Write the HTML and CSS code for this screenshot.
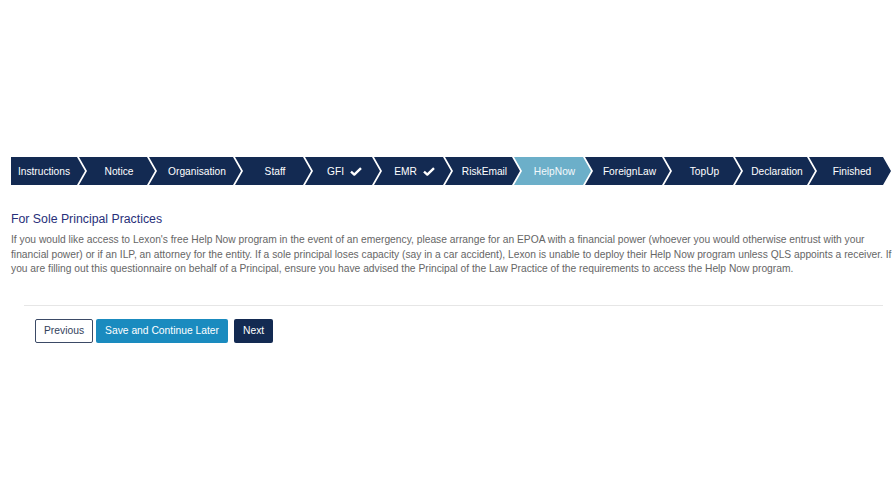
FILE: index.html
```html
<!DOCTYPE html>
<html lang="en">
<head>
<meta charset="utf-8">
<title>Help Now</title>
<link rel="stylesheet" href="styles.css">
</head>
<body>
<div class="page">
  <nav class="steps">
    <div class="step step-first s-instr">Instructions</div>
    <div class="step s-notice">Notice</div>
    <div class="step s-org">Organisation</div>
    <div class="step s-staff">Staff</div>
    <div class="step s-gfi">GFI <svg class="check" viewBox="0 0 12 9" width="12" height="9"><path d="M1 4.6 L4.3 7.6 L11 1.2" fill="none" stroke="#fff" stroke-width="2.4" stroke-linejoin="round"/></svg></div>
    <div class="step s-emr">EMR <svg class="check" viewBox="0 0 12 9" width="12" height="9"><path d="M1 4.6 L4.3 7.6 L11 1.2" fill="none" stroke="#fff" stroke-width="2.4" stroke-linejoin="round"/></svg></div>
    <div class="step s-risk">RiskEmail</div>
    <div class="step step-active s-help">HelpNow</div>
    <div class="step s-foreign">ForeignLaw</div>
    <div class="step s-topup">TopUp</div>
    <div class="step s-decl">Declaration</div>
    <div class="step s-fin">Finished</div>
  </nav>

  <section class="content">
    <h2 class="title">For Sole Principal Practices</h2>
    <p class="text">If you would like access to Lexon's free Help Now program in the event of an emergency, please arrange for an EPOA with a financial power (whoever you would otherwise entrust with your financial power) or if an ILP, an attorney for the entity. If a sole principal loses capacity (say in a car accident), Lexon is unable to deploy their Help Now program unless QLS appoints a receiver. If you are filling out this questionnaire on behalf of a Principal, ensure you have advised the Principal of the Law Practice of the requirements to access the Help Now program.</p>
  </section>

  <div class="footer">
    <hr class="rule">
    <div class="actions">
      <button class="btn btn-outline">Previous</button>
      <button class="btn btn-save">Save and Continue Later</button>
      <button class="btn btn-next">Next</button>
    </div>
  </div>
</div>
</body>
</html>
```

FILE: styles.css
```css
html, body {
  margin: 0;
  padding: 0;
  background: #ffffff;
}

body {
  font-family: "Liberation Sans", Arial, sans-serif;
}

.page {
  padding: 157px 0 0 11px;
}

/* Stepper */
.steps {
  display: flex;
  height: 28px;
}

.step {
  flex: 0 0 auto;
  height: 28px;
  display: flex;
  align-items: center;
  justify-content: center;
  gap: 6px;
  box-sizing: border-box;
  padding-left: 4px;
  margin-left: -6px;
  background: #132a52;
  color: #ffffff;
  font-size: 10.2px;
  white-space: nowrap;
  clip-path: polygon(0 0, calc(100% - 8px) 0, 100% 50%, calc(100% - 8px) 100%, 0 100%, 8px 50%);
}

.step-first {
  margin-left: 0;
  padding-left: 0;
  padding-right: 8px;
  clip-path: polygon(0 0, calc(100% - 8px) 0, 100% 50%, calc(100% - 8px) 100%, 0 100%);
}

.step-active {
  background: #6cafc9;
  color: #f4f9fc;
}

.check {
  display: block;
}

.s-instr { width: 74px; }
.s-notice { width: 76px; }
.s-org { width: 92px; }
.s-staff { width: 76px; }
.s-gfi { width: 75px; }
.s-emr { width: 77px; }
.s-risk { width: 75px; }
.s-help { width: 77px; }
.s-foreign { width: 85px; }
.s-topup { width: 77px; }
.s-decl { width: 80px; }
.s-fin { width: 82px; }

/* Content */
.content {
  padding-top: 26px;
}

.title {
  margin: 0;
  font-size: 12.3px;
  line-height: 17px;
  font-weight: normal;
  color: #28307a;
}

.text {
  margin: 5px 0 0;
  font-size: 10.25px;
  line-height: 14.6px;
  color: #666666;
}

/* Footer */
.footer {
  padding: 0 10px 0 13px;
}

.rule {
  margin: 28px 0 0;
  border: 0;
  border-top: 1px solid #e6e6e6;
  height: 0;
}

.actions {
  display: flex;
  gap: 3px;
  padding: 13px 0 0 11px;
}

.btn {
  height: 24px;
  box-sizing: border-box;
  padding: 0 8px;
  border-radius: 2px;
  font-family: "Liberation Sans", Arial, sans-serif;
  font-size: 10.3px;
  border: 1px solid transparent;
  cursor: pointer;
}

.btn-outline {
  background: #ffffff;
  color: #33415c;
  border-color: #3b4a66;
}

.btn-save {
  background: #1a8bbf;
  color: #ffffff;
}

.btn-next {
  background: #132a52;
  color: #ffffff;
  margin-left: 3px;
}
```
